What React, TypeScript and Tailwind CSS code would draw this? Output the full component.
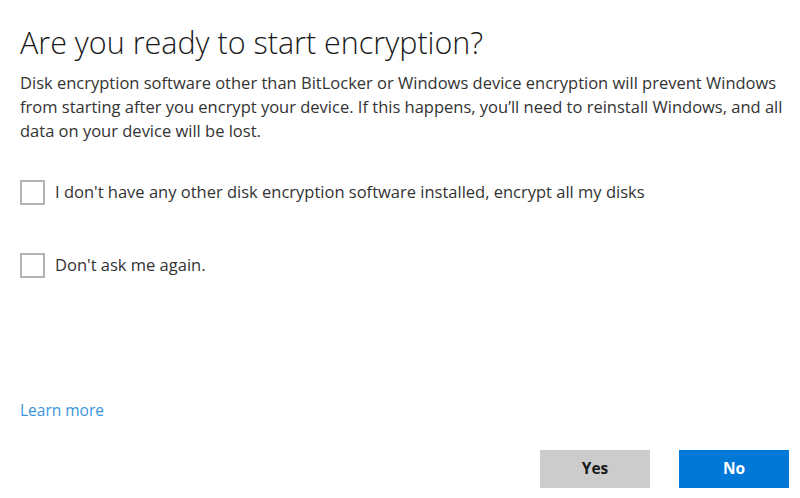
import { useState } from "react";

const FONT = { fontFamily: '"Open Sans", "Noto Sans", "Liberation Sans", sans-serif' };

function CheckRow({ label }: { label: string }) {
  const [checked, setChecked] = useState(false);
  return (
    <label className="flex cursor-pointer items-center gap-[10px]">
      <span
        onClick={() => setChecked((c) => !c)}
        className="flex h-[25px] w-[25px] shrink-0 items-center justify-center border-2 border-[#b3b3b3] bg-white"
      >
        {checked && (
          <svg width="16" height="16" viewBox="0 0 16 16" aria-hidden>
            <path d="M2 8.5l4 4 8-9" fill="none" stroke="#1a1a1a" strokeWidth="1.6" />
          </svg>
        )}
      </span>
      <span className="text-[16.5px] text-[#333]">{label}</span>
    </label>
  );
}

export default function App() {
  return (
    <div className="flex h-[498px] w-[800px] flex-col bg-white" style={FONT}>
      <div className="pl-5 pt-[22px]">
        <h1 className="text-[30.5px] font-light leading-[40px] text-[#1a1a1a]">
          Are you ready to start encryption?
        </h1>
        <p className="mt-[9px] max-w-[780px] text-[16.5px] leading-[24px] text-[#333]">
          Disk encryption software other than BitLocker or Windows device encryption will prevent
          Windows from starting after you encrypt your device. If this happens, you&rsquo;ll need to
          reinstall Windows, and all data on your device will be lost.
        </p>
      </div>

      <div className="mt-[37px] flex flex-col gap-[48px] pl-5">
        <CheckRow label="I don't have any other disk encryption software installed, encrypt all my disks" />
        <CheckRow label="Don't ask me again." />
      </div>

      <div className="flex-1" />

      <div className="pl-5">
        <a href="#" className="text-[15.5px] text-[#3a96dd]">
          Learn more
        </a>
      </div>

      <div className="mb-[10px] mr-[11px] mt-[28px] flex justify-end gap-[29px]">
        <button className="h-[38px] w-[110px] bg-[#cccccc] text-[15.5px] font-bold text-[#1a1a1a]">
          Yes
        </button>
        <button className="h-[38px] w-[110px] bg-[#0078d7] text-[15.5px] font-bold text-white">
          No
        </button>
      </div>
    </div>
  );
}
